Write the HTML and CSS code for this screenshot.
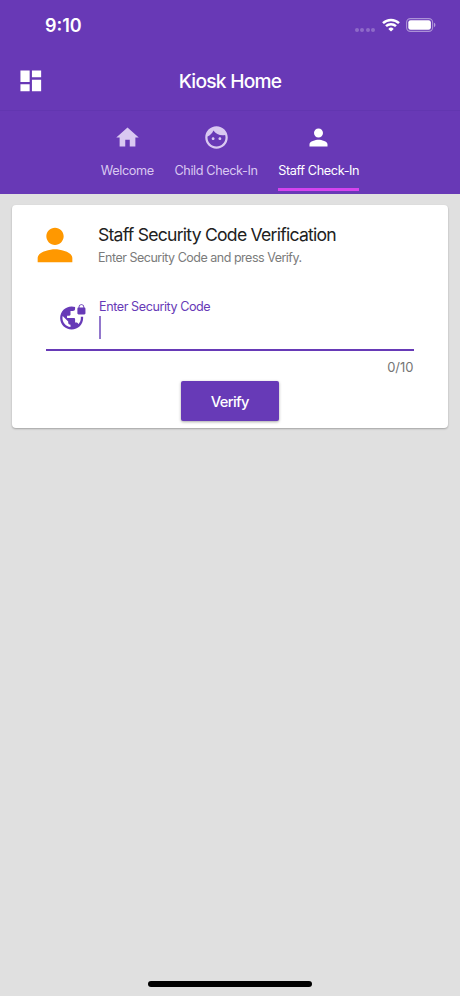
FILE: index.html
```html
<!DOCTYPE html>
<html lang="en">
<head>
<meta charset="utf-8">
<meta name="viewport" content="width=device-width, initial-scale=1">
<title>Kiosk Home</title>
<link rel="stylesheet" href="styles.css">
</head>
<body>
<header class="top">
  <div class="status">
    <span class="time">9:10</span>
    <div class="indicators">
      <span class="dots"><i></i><i></i><i></i><i></i></span>
      <svg class="wifi" viewBox="0 0 18 14"><g fill="none" stroke="#fff" stroke-width="2.5"><path d="M1 5.1a11.6 11.6 0 0 1 16 0"/><path d="M4 8.2a7.2 7.2 0 0 1 10 0"/></g><path fill="#fff" d="M9 13.6 6.3 10.9a3.8 3.8 0 0 1 5.4 0z"/></svg>
      <svg class="battery" viewBox="0 0 30 14"><rect x=".6" y=".6" width="26" height="12.8" rx="3.8" fill="none" stroke="#fff" stroke-opacity=".45" stroke-width="1.1"/><rect x="2.3" y="2.3" width="22.6" height="9.4" rx="2.3" fill="#fff"/><path d="M28 4.8v4.4a2.4 2.4 0 0 0 0-4.4z" fill="#fff" fill-opacity=".5"/></svg>
    </div>
  </div>
  <div class="appbar">
    <svg class="menu" viewBox="0 0 24 24"><path d="M3 13h8V3H3v10zm0 8h8v-6H3v6zm10 0h8V11h-8v10zm0-18v6h8V3h-8z"/></svg>
    <h1>Kiosk Home</h1>
  </div>
  <nav class="tabs">
    <a class="tab welcome">
      <svg viewBox="0 0 24 24"><path d="M10 20v-6h4v6h5v-8h3L12 3 2 12h3v8z"/></svg>
      <span>Welcome</span>
    </a>
    <a class="tab child">
      <svg viewBox="0 0 24 24"><path d="M9 11.75c-.69 0-1.25.56-1.25 1.25s.56 1.25 1.25 1.25 1.25-.56 1.25-1.25-.56-1.25-1.25-1.25zm6 0c-.69 0-1.25.56-1.25 1.25s.56 1.25 1.25 1.25 1.25-.56 1.25-1.25-.56-1.25-1.25-1.25zM12 2C6.48 2 2 6.48 2 12s4.48 10 10 10 10-4.48 10-10S17.52 2 12 2zm0 18c-4.41 0-8-3.59-8-8 0-.29.02-.58.05-.86 2.36-1.05 4.23-2.98 5.21-5.37C11.07 8.33 14.05 10 17.42 10c.78 0 1.53-.09 2.25-.26.21.71.33 1.47.33 2.26 0 4.41-3.59 8-8 8z"/></svg>
      <span>Child Check-In</span>
    </a>
    <a class="tab staff active">
      <svg viewBox="0 0 24 24"><path d="M12 12c2.21 0 4-1.79 4-4s-1.79-4-4-4-4 1.79-4 4 1.79 4 4 4zm0 2c-2.67 0-8 1.34-8 4v2h16v-2c0-2.66-5.33-4-8-4z"/></svg>
      <span>Staff Check-In</span>
    </a>
  </nav>
</header>
<main class="content">
  <section class="card">
    <div class="intro">
      <svg class="avatar" viewBox="0 0 24 24"><path d="M12 12c2.21 0 4-1.79 4-4s-1.79-4-4-4-4 1.79-4 4 1.79 4 4 4zm0 2c-2.67 0-8 1.34-8 4v2h16v-2c0-2.66-5.33-4-8-4z"/></svg>
      <div class="copy">
        <h2>Staff Security Code Verification</h2>
        <p>Enter Security Code and press Verify.</p>
      </div>
    </div>
    <div class="field">
      <svg class="lock" viewBox="0 0 24 24"><path d="M22 4v-.5C22 2.12 20.88 1 19.5 1S17 2.12 17 3.5V4c-.55 0-1 .45-1 1v4c0 .55.45 1 1 1h5c.55 0 1-.45 1-1V5c0-.55-.45-1-1-1zm-.8 0h-3.4v-.5c0-.94.76-1.7 1.7-1.7s1.7.76 1.7 1.7V4zm-2.28 8c.04.33.08.66.08 1 0 2.08-.8 3.97-2.1 5.39-.26-.81-1-1.39-1.9-1.39h-1v-3c0-.55-.45-1-1-1H7v-2h2c.55 0 1-.45 1-1V7h2c1.1 0 2-.9 2-2V3.46c-.95-.3-1.95-.46-3-.46C5.48 3 1 7.48 1 13s4.48 10 10 10 10-4.48 10-10c0-.34-.02-.67-.05-1h-2.03zM10 20.93c-3.95-.49-7-3.85-7-7.93 0-.62.08-1.21.21-1.79L8 16v1c0 1.1.9 2 2 2v1.93z"/></svg>
      <div class="entry">
        <label>Enter Security Code</label>
        <div class="caret"></div>
      </div>
    </div>
    <div class="counter"><span>0/10</span></div>
    <button class="verify"><span>Verify</span></button>
  </section>
</main>
<footer class="home"><div class="bar"></div></footer>
</body>
</html>
```
FILE: styles.css
```css
* { box-sizing: border-box; }
body {
  margin: 0;
  height: 996px;
  display: flex;
  flex-direction: column;
  background: #e0e0e0;
  font-family: Inter, "Liberation Sans", sans-serif;
  overflow: hidden;
}
svg { display: block; flex: none; fill: currentColor; }
h1, h2, p { margin: 0; font-weight: 400; white-space: nowrap; }
span, label { white-space: nowrap; }

.top { height: 193.5px; background: #6839b6; color: #fff; }
.status {
  height: 51px;
  display: flex;
  justify-content: space-between;
  padding: 0 24px 0 45px;
}
.time { margin-top: 14px; font-size: 18px; line-height: 24px; font-weight: 600; letter-spacing: 0; }
.indicators { display: flex; align-items: flex-start; }
.dots { display: flex; gap: 1.5px; margin: 28px 7px 0 0; }
.dots i { width: 4px; height: 4px; border-radius: 50%; background: #fff; opacity: .25; }
.wifi { width: 18px; height: 14px; margin: 18px 6px 0 0; }
.battery { width: 30px; height: 14px; margin-top: 18px; }

.appbar {
  height: 60px;
  display: grid;
  grid-template-columns: 28px 1fr 28px;
  align-items: center;
  padding: 0 17px;
  border-bottom: 1px solid #6236b0;
}
.menu { width: 27.6px; height: 27.6px; margin: 0 0 0 0.4px; }
h1 { text-align: center; font-size: 19.2px; font-weight: 500; line-height: 24px; letter-spacing: -0.75px; }

.tabs { display: flex; justify-content: center; height: 82.5px; padding: 13px 0 0 0; gap: 20.7px; }
.tab { display: flex; flex-direction: column; align-items: center; height: 67px; color: #d9c8f1; }
.tab svg { width: 27px; height: 27px; }
.tab span { margin-top: 11px; font-size: 12.7px; line-height: 18px; letter-spacing: -0.4px; }
.tab.active { color: #fff; border-bottom: 3px solid #d643ef; }

.content { flex: 1; padding: 11.5px 12px 0 11.5px; }
.card {
  height: 223px;
  display: flex;
  flex-direction: column;
  background: #fff;
  border-radius: 4px;
  box-shadow: 0 1px 2px rgba(0,0,0,.28);
}
.intro { display: flex; height: 90px; padding: 14px 0 0 17px; }
.avatar { width: 52px; height: 52px; color: #ff9800; }
.copy { margin: 3px 0 0 17.5px; }
h2 { font-size: 17.6px; line-height: 26px; color: #212121; letter-spacing: -0.76px; }
p { margin-top: 1px; font-size: 12.5px; line-height: 18px; color: #7b7b7b; letter-spacing: -0.49px; }
.field {
  display: flex;
  height: 56px;
  margin: 0 34.5px;
  padding: 7px 0 0 13px;
  border-bottom: 2px solid #673ab7;
  color: #673ab7;
}
.lock { width: 27.6px; height: 27.6px; margin-top: 1.2px; }
.entry { margin-left: 12.5px; display: flex; flex-direction: column; }
label { font-size: 12.6px; line-height: 16px; letter-spacing: -0.44px; margin-top: -3px; }
.caret { width: 2px; height: 23px; margin-top: 1px; background: #9277cc; }
.counter { display: flex; justify-content: flex-end; height: 30px; padding: 7px 34.5px 0 0; font-size: 13px; line-height: 18px; color: #757575; }
.verify {
  align-self: center;
  flex: none;
  width: 98px;
  height: 40px;
  padding: 1px 0 0;
  border: 0;
  border-radius: 2px;
  background: #673ab7;
  color: #fff;
  font: 500 14.7px/20px Inter, "Liberation Sans", sans-serif;
  letter-spacing: -0.6px;
  box-shadow: 0 1px 3px rgba(0,0,0,.35);
}
.home { display: flex; justify-content: center; height: 15px; }
.bar { width: 164px; height: 6px; border-radius: 3px; background: #000; }
```
